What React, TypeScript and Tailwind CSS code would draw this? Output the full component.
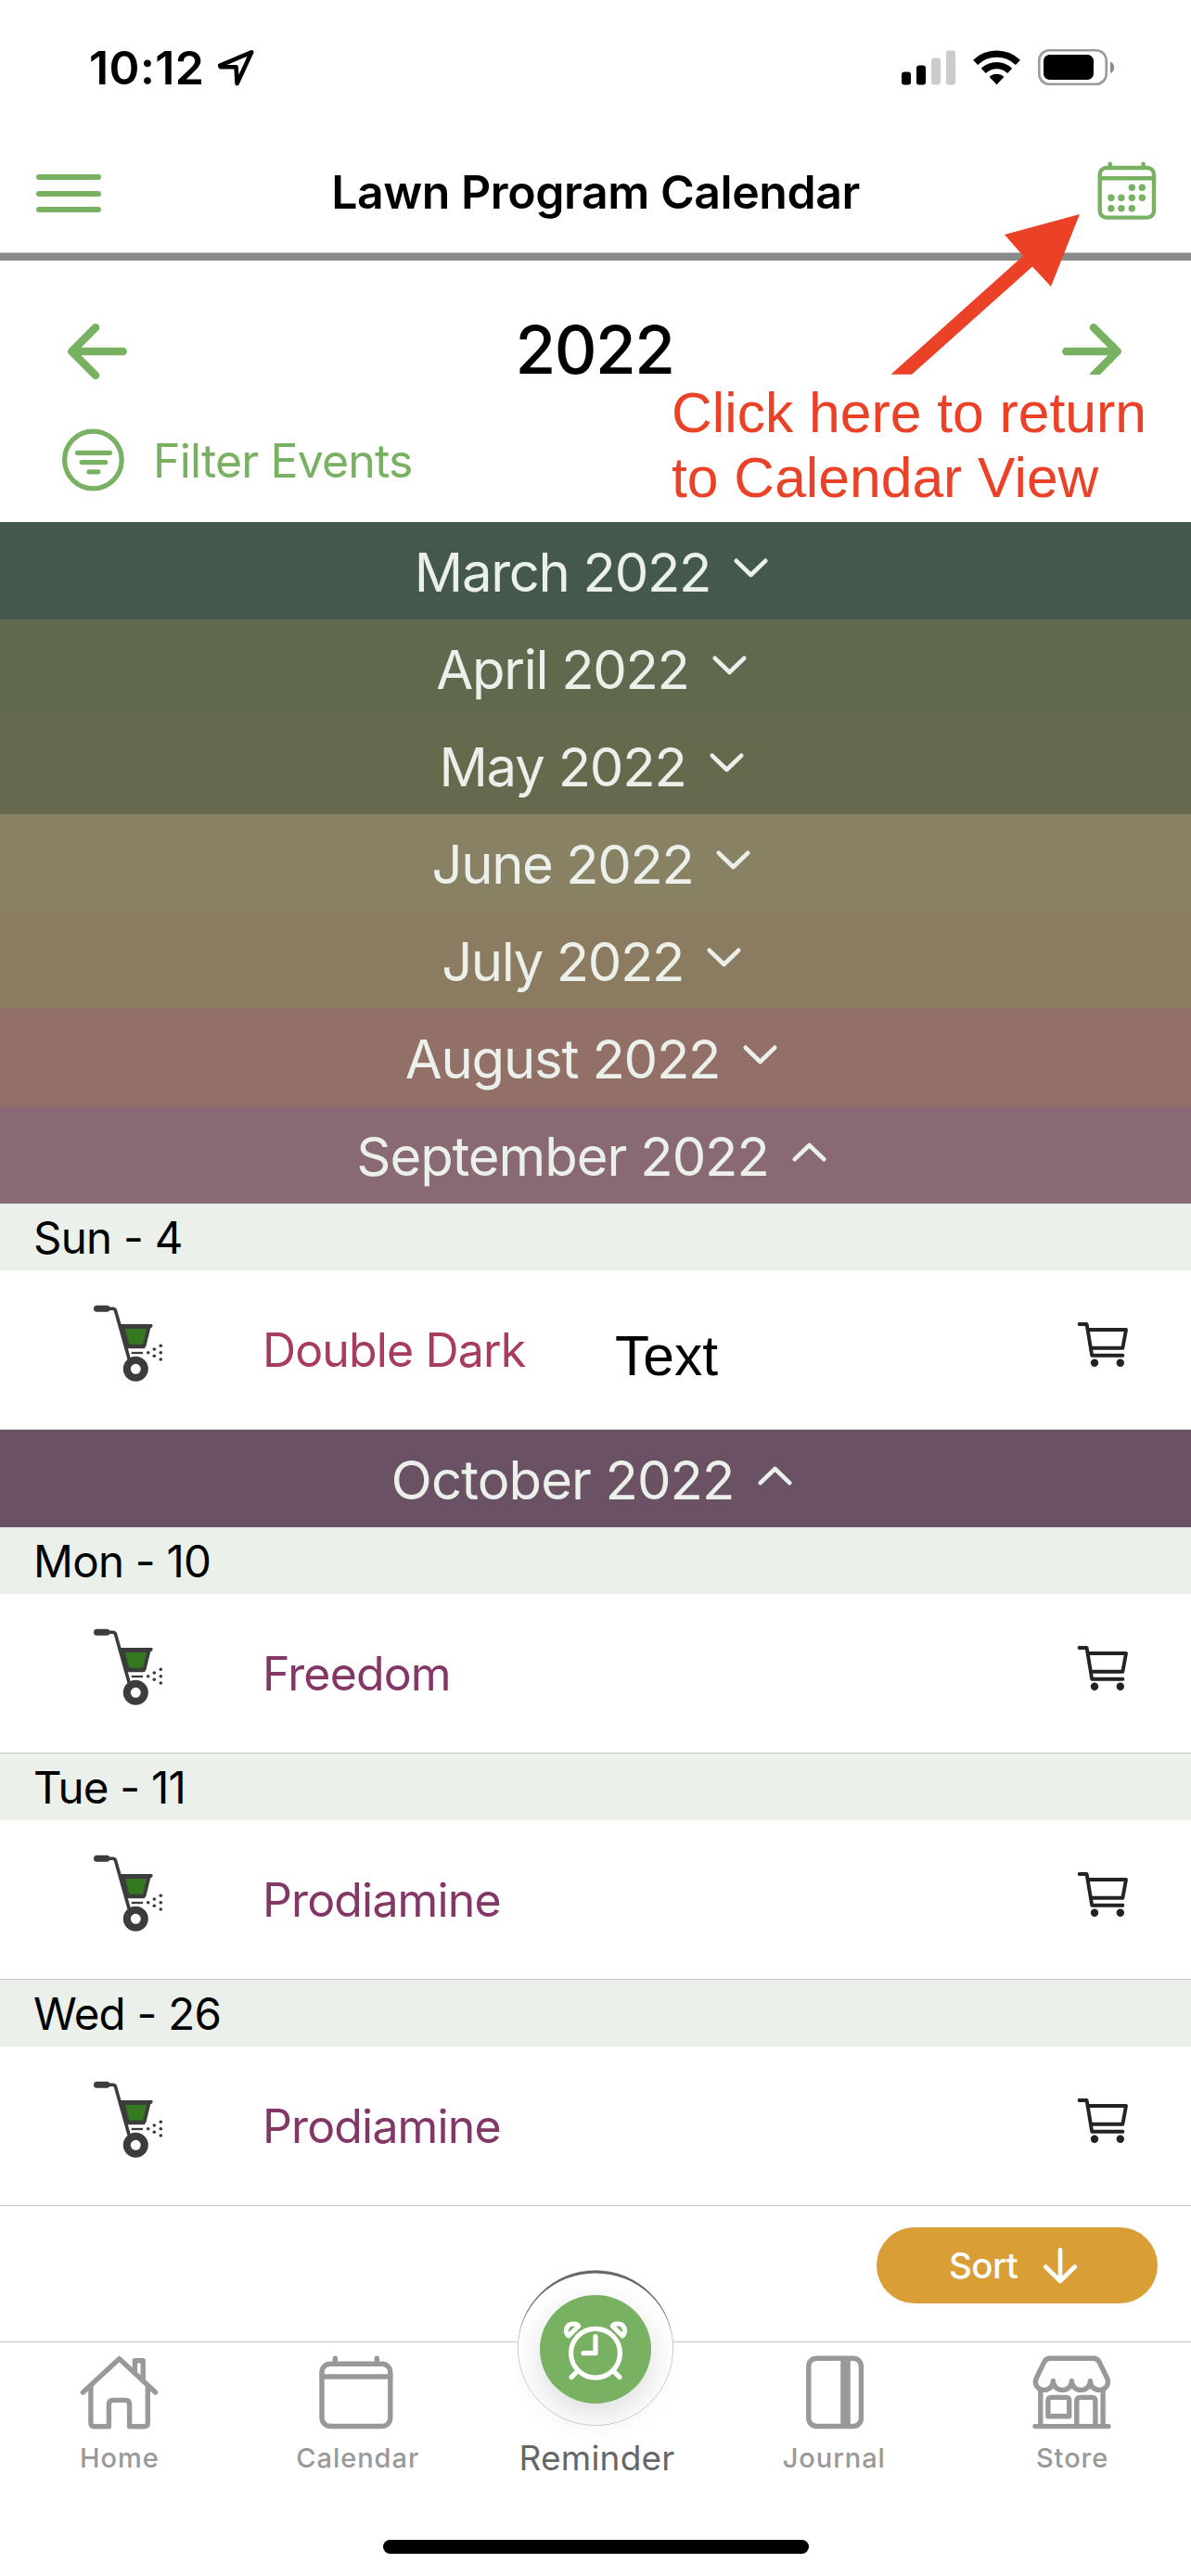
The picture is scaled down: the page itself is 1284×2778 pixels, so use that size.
import React, { useState } from 'react';

type LawnEvent = { day: string; name: string; color: string; note?: string };
type Month = { label: string; bg: string; tracking: string; events: LawnEvent[] };

const months: Month[] = [
  { label: 'March 2022', bg: 'bg-[#44594b]', tracking: 'tracking-[-1.3px]', events: [] },
  { label: 'April 2022', bg: 'bg-[#5f694e]', tracking: 'tracking-[-1.3px]', events: [] },
  { label: 'May 2022', bg: 'bg-[#67694d]', tracking: 'tracking-[-1.2px]', events: [] },
  { label: 'June 2022', bg: 'bg-[#888163]', tracking: 'tracking-[-1.4px]', events: [] },
  { label: 'July 2022', bg: 'bg-[#8b7b60]', tracking: 'tracking-[-1.4px]', events: [] },
  { label: 'August 2022', bg: 'bg-[#927067]', tracking: 'tracking-[-1.2px]', events: [] },
  {
    label: 'September 2022',
    bg: 'bg-[#896973]',
    tracking: 'tracking-[-1.1px]',
    events: [{ day: 'Sun - 4', name: 'Double Dark', color: 'text-[#a83c5d]', note: 'Text' }],
  },
  {
    label: 'October 2022',
    bg: 'bg-[#6a5264]',
    tracking: 'tracking-[-0.9px]',
    events: [
      { day: 'Mon - 10', name: 'Freedom', color: 'text-[#833766]' },
      { day: 'Tue - 11', name: 'Prodiamine', color: 'text-[#833766]' },
      { day: 'Wed - 26', name: 'Prodiamine', color: 'text-[#833766]' },
    ],
  },
];

function StatusBar() {
  return (
    <div className="flex h-[142px] items-center justify-between pt-[4px] pl-[96px] pr-[82px]">
      <div className="flex items-center gap-[14px]">
        <span className="text-[50px] leading-none font-semibold tracking-[0.4px]">10:12</span>
        <svg width="42" height="42" viewBox="0 0 42 42" fill="none" stroke="#000" strokeWidth="4.6" strokeLinejoin="round">
          <path d="M37.2 4.3 L3.2 18.6 L3.8 20.3 H20.6 L21.6 38 Z" />
        </svg>
      </div>
      <div className="flex items-center">
        <svg width="58" height="38" viewBox="0 0 58 38">
          <rect x="0" y="23.5" width="10" height="14" rx="3" fill="#000" />
          <rect x="16" y="16.5" width="10" height="21" rx="3" fill="#000" />
          <rect x="32" y="8.5" width="10" height="29" rx="3" fill="#cbcbcb" />
          <rect x="48" y="0.5" width="10" height="37" rx="3" fill="#cbcbcb" />
        </svg>
        <svg className="ml-[19px]" width="51" height="38" viewBox="0 0 51 38" fill="none" stroke="#000" strokeWidth="7.2">
          <path d="M2.6 13.4 A33 33 0 0 1 48.4 13.4" />
          <path d="M11.3 22.4 A20.3 20.3 0 0 1 39.7 22.4" />
          <path d="M25.5 37.3 L17.6 29 A11.5 11.5 0 0 1 33.4 29 Z" fill="#000" stroke="none" />
        </svg>
        <svg className="ml-[19px]" width="83" height="40" viewBox="0 0 83 40">
          <rect x="1.3" y="1.3" width="72.4" height="36.4" rx="11" fill="none" stroke="#9a9a9a" strokeWidth="2.6" />
          <rect x="6" y="6" width="54" height="27" rx="6.5" fill="#000" />
          <path d="M78 13.5 C80.6 14.6 82.2 17 82.2 19.7 C82.2 22.4 80.6 24.8 78 26 Z" fill="#8b8b8b" />
        </svg>
      </div>
    </div>
  );
}

function CalendarGridIcon() {
  const dots = [
    [38.3, 30.3], [49.3, 30.3],
    [15.9, 41.3], [26.9, 41.3], [38.3, 41.3], [49.3, 41.3],
    [15.9, 52.7], [26.9, 52.7], [38.3, 52.7],
  ];
  return (
    <svg className="mb-[3px]" width="66" height="67" viewBox="0 0 66 67" fill="none" stroke="#79b163" strokeWidth="4.4" strokeLinecap="round">
      <rect x="3.7" y="9" width="58.3" height="53.6" rx="7" />
      <path d="M4 20.3 H62 M14.7 4.8 V9 M50.6 4.8 V9" />
      {dots.map(([x, y]) => (
        <circle key={`${x}-${y}`} cx={x} cy={y} r="3.7" fill="#79b163" stroke="none" />
      ))}
    </svg>
  );
}

function NavBar() {
  return (
    <div className="flex h-[130px] items-center justify-between pl-[39px] pr-[36px]">
      <button className="flex w-[63px] flex-col gap-[11.5px] pt-[3px]">
        <span className="h-[6px] w-[70px] rounded-full bg-[#79b163]" />
        <span className="h-[6px] w-[70px] rounded-full bg-[#79b163]" />
        <span className="h-[6px] w-[70px] rounded-full bg-[#79b163]" />
      </button>
      <h1 className="text-[50px] leading-none font-semibold tracking-[-0.45px]">Lawn Program Calendar</h1>
      <CalendarGridIcon />
    </div>
  );
}

function ArrowIcon({ flip }: { flip?: boolean }) {
  return (
    <svg
      className={flip ? 'mt-[4px] rotate-180' : 'mt-[4px]'}
      width="66" height="62" viewBox="0 0 66 62"
      fill="none" stroke="#79b163" strokeWidth="8.6" strokeLinecap="round" strokeLinejoin="round"
    >
      <path d="M31 5.2 L5.3 31 L31 56.8 M7 31 H60.6" />
    </svg>
  );
}

function YearHeader() {
  return (
    <div className="h-[282px] pt-[20px]">
      <div className="flex h-[152px] items-center justify-between pr-[74px] pl-[72px]">
        <ArrowIcon />
        <h2 className="text-[71px] leading-none font-medium tracking-[-1.5px]">2022</h2>
        <ArrowIcon flip />
      </div>
      <button className="flex h-[86px] items-center gap-[30px] pl-[66px] text-[#79b163]">
        <svg width="69" height="68" viewBox="0 0 69 68" fill="none" stroke="currentColor" strokeWidth="5.3" strokeLinecap="round">
          <circle cx="34.4" cy="34" r="30.8" />
          <path d="M17.4 26.3 H52.4 M22.2 36.6 H47.6 M30 46.8 H39.8" />
        </svg>
        <span className="pt-[1px] text-[50px] leading-none tracking-[-0.85px]">Filter Events</span>
      </button>
    </div>
  );
}

// Note and pointer laid over the header
function CalendarHint() {
  return (
    <>
      <div className="absolute top-[404px] left-[724px] h-[146px] w-[520px] bg-white font-['Liberation_Sans'] text-[60.6px] leading-[70px] whitespace-nowrap text-[#ea4127]">
        <div className="pt-[6px]">
          Click here to return
          <br />
          to Calendar View
        </div>
      </div>
      <svg className="absolute top-[230px] left-[960px]" width="206" height="174" viewBox="0 0 206 174">
        <path d="M204 1 L123 23 L143 46 L0.5 173.7 H23 L153 57.5 L173 79 Z" fill="#ea4127" />
      </svg>
    </>
  );
}

function SpreaderIcon() {
  return (
    <svg width="76" height="86" viewBox="0 0 76 86" fill="none" stroke="#3c3c3c">
      <rect x="1" y="1.8" width="17.5" height="7" rx="3.5" fill="#3c3c3c" stroke="none" />
      <path d="M17 5.3 H21.5 Q24 5.3 24.6 7.6 L39.3 60" strokeWidth="3.6" />
      <path d="M29 22 H64 Q65.4 24 63.5 25.8 L62.3 26 L57.5 45.5 Q56.6 48.3 54 48.3 H36.7 Z" fill="#3c3c3c" stroke="none" />
      <path d="M35 27 H58.3 L54.5 42.6 Q54 43.8 52.6 43.8 H40.6 Q39.3 43.8 38.9 42.6 Z" fill="#34781f" stroke="none" />
      <path d="M41.7 53 H54" strokeWidth="2.3" />
      <circle cx="46.3" cy="70.3" r="9.5" strokeWidth="8" />
      <g fill="#3c3c3c" stroke="none">
        <circle cx="59.7" cy="52.7" r="1.8" />
        <circle cx="66.3" cy="49" r="1.8" />
        <circle cx="66.3" cy="56.3" r="1.8" />
        <circle cx="73.3" cy="45.3" r="1.8" />
        <circle cx="73.3" cy="52.7" r="1.8" />
        <circle cx="73.3" cy="60" r="1.8" />
      </g>
    </svg>
  );
}

function CartIcon() {
  return (
    <svg className="mb-[12px]" width="58" height="52" viewBox="0 0 58 52" fill="none" stroke="#222327" strokeWidth="3.9" strokeLinecap="round" strokeLinejoin="round">
      <path d="M3.6 4 H11.6 L17.2 37.8 H50.4" />
      <path d="M12.8 10 H54 L50.3 29.8 H16" />
      <circle cx="20" cy="45.8" r="4.2" fill="#222327" stroke="none" />
      <circle cx="47.8" cy="45.8" r="4.2" fill="#222327" stroke="none" />
    </svg>
  );
}

function EventRow({ event }: { event: LawnEvent }) {
  return (
    <div>
      <div className="flex h-[72px] items-center bg-[#ebf0ea] pt-[2px] pl-[36px] text-[47.5px] leading-none tracking-[-0.75px]">
        {event.day}
      </div>
      <div className="relative flex h-[172px] items-center border-b border-[#c8c8c8] pr-[66px] pl-[100px]">
        <div className="w-[183px] pb-[14px]">
          <SpreaderIcon />
        </div>
        <span className={`flex-1 text-[50px] leading-none tracking-[-0.85px] ${event.color}`}>{event.name}</span>
        {event.note && (
          <span className="absolute top-[57px] left-[663px] font-['Liberation_Sans'] text-[60.6px] leading-[70px]">
            {event.note}
          </span>
        )}
        <CartIcon />
      </div>
    </div>
  );
}

function MonthSection({ month }: { month: Month }) {
  const [open, setOpen] = useState(month.events.length > 0);
  return (
    <section>
      <button
        onClick={() => setOpen(!open)}
        className={`flex h-[105px] w-full items-center justify-center gap-[25px] pr-[9px] text-[#ebf0ea] ${month.bg}`}
      >
        <span className={`pt-[3px] text-[58px] leading-none ${month.tracking}`}>{month.label}</span>
        <svg className={open ? 'mb-[6px] rotate-180' : 'mb-[6px]'} width="37" height="21" viewBox="0 0 37 21" fill="none" stroke="currentColor" strokeWidth="4.6" strokeLinecap="round" strokeLinejoin="round">
          <path d="M2.8 2.8 L18.5 18 L34.2 2.8" />
        </svg>
      </button>
      {open && month.events.map((event) => <EventRow key={event.day} event={event} />)}
    </section>
  );
}

function HomeIcon() {
  return (
    <svg width="86" height="80" viewBox="0 0 86 80" fill="none" stroke="#999" strokeWidth="5.4" strokeLinecap="round" strokeLinejoin="round">
      <path d="M4.4 40 L43.6 3.7 L82.6 40" />
      <path d="M12.9 33 V73 Q12.9 76.7 16.6 76.7 H32.4 V53 Q32.4 48.4 37 48.4 H50 Q54.6 48.4 54.6 53 V76.7 H70.6 Q74.3 76.7 74.3 73 V33" />
      <path d="M60.4 18 V5.8 H69.2 V27" />
    </svg>
  );
}

function CalendarIcon() {
  return (
    <svg width="86" height="80" viewBox="0 0 86 80" fill="none" stroke="#999" strokeWidth="5.4" strokeLinecap="round">
      <rect x="5" y="9.3" width="73.8" height="67.2" rx="9" />
      <path d="M5 23 H78.8 M19.3 3.2 V9 M64.3 3.2 V9" />
    </svg>
  );
}

function JournalIcon() {
  return (
    <svg width="86" height="80" viewBox="0 0 86 80" fill="none" stroke="#999" strokeWidth="5.4">
      <rect x="15.8" y="3.2" width="56.6" height="73.3" rx="8.5" />
      <path d="M55.5 3 V77" strokeWidth="10.6" />
    </svg>
  );
}

function StoreIcon() {
  return (
    <svg width="86" height="80" viewBox="0 0 86 80" fill="none" stroke="#999" strokeWidth="5.4" strokeLinecap="round" strokeLinejoin="round">
      <path d="M19 3.3 H65.6 C69 3.3 71 4.8 72.3 7.6 L80.3 24.2 C83.6 31 79 37.4 72.4 37.4 C66.6 37.4 62.4 33.4 62.4 27.8 C62.4 33.4 58 37.4 52.4 37.4 C46.8 37.4 42.4 33.4 42.4 27.8 C42.4 33.4 38 37.4 32.4 37.4 C26.8 37.4 22.4 33.4 22.4 27.8 C22.4 33.4 18 37.4 12.4 37.4 C5.8 37.4 1.2 31 4.5 24.2 L12.5 7.6 C13.8 4.8 15.8 3.3 19 3.3 Z" />
      <path d="M8.8 38 V76 M76.1 38 V76 M3 76.6 H82" />
      <path d="M20.5 45.4 H36 Q39.7 45.4 39.7 49 V65.7 H16.9 V49 Q16.9 45.4 20.5 45.4 Z" />
      <path d="M47.8 76 V49.5 Q47.8 45.4 51.8 45.4 H64 Q67.9 45.4 67.9 49.5 V76" />
    </svg>
  );
}

function Tab({ label, children }: { label: string; children: React.ReactNode }) {
  return (
    <button className="flex flex-1 flex-col items-center pt-[14px]">
      {children}
      <span className="mt-[11px] pl-[1px] text-[29px] leading-[40px] font-medium tracking-[0.95px] text-[#999]">{label}</span>
    </button>
  );
}

function ReminderTab() {
  return (
    <button className="relative flex flex-1 flex-col items-center">
      <div className="absolute top-[-78px] flex h-[168px] w-[168px] items-start justify-center rounded-full bg-white pt-[27px]">
        <svg className="absolute inset-0" width="168" height="168" viewBox="0 0 168 168">
          <circle cx="84" cy="84" r="83.6" fill="none" stroke="#c4c4c4" strokeWidth="0.8" />
          <path d="M0.4 84 A83.6 83.6 0 0 1 167.6 84 A83.6 80.6 0 0 0 0.4 84 Z" fill="#666" />
        </svg>
        <div className="relative h-[117px] w-[120px] rounded-[50%] bg-[#79b163] shadow-[0_12px_36px_rgba(0,0,0,0.14)]">
          <svg width="120" height="117" viewBox="0 0 120 117" fill="none" stroke="#fff" strokeWidth="5.2" strokeLinecap="round" strokeLinejoin="round">
            <circle cx="60" cy="62.7" r="26.4" />
            <path d="M60 44.5 V62.7 H47" />
            <path d="M34 88.6 L41 81.6 M86 88.6 L79 81.6" />
            <path d="M31 44 C26.5 40 28 31 36 31 C39 31 41 32 41.7 33.5 Z" />
            <path d="M89 44 C93.5 40 92 31 84 31 C81 31 79 32 78.3 33.5 Z" />
          </svg>
        </div>
      </div>
      <span className="relative mt-[104px] pl-[3px] text-[37px] leading-[42px] tracking-[0.2px] text-[#666]">Reminder</span>
    </button>
  );
}

export default function App() {
  return (
    <div className="relative flex h-[2778px] w-[1284px] flex-col overflow-hidden bg-white font-['Inter',sans-serif] text-black">
      <StatusBar />
      <NavBar />
      <div className="h-[9px] border-t border-[#c6c6c8] bg-[#8b8b8b]" />
      <YearHeader />
      <CalendarHint />

      {/* Months */}
      <main>
        {months.map((month) => (
          <MonthSection key={month.label} month={month} />
        ))}
      </main>

      <div className="flex flex-1 justify-end pt-[23px] pr-[36px]">
        <button className="flex h-[82px] w-[303px] items-center gap-[27px] rounded-full bg-[#da9e37] pl-[78px] text-white">
          <span className="text-[38.5px] leading-none font-medium tracking-[-0.6px]">Sort</span>
          <svg width="38" height="40" viewBox="0 0 38 40" fill="none" stroke="currentColor" strokeWidth="4.6" strokeLinecap="round" strokeLinejoin="round">
            <path d="M19 3.2 V36.4 M3.2 21.5 L19 37 L34.8 21.5" />
          </svg>
        </button>
      </div>

      {/* Bottom tabs */}
      <nav className="flex h-[214px] border-t border-[#c6c6c6]">
        <Tab label="Home"><HomeIcon /></Tab>
        <Tab label="Calendar"><CalendarIcon /></Tab>
        <ReminderTab />
        <Tab label="Journal"><JournalIcon /></Tab>
        <Tab label="Store"><StoreIcon /></Tab>
      </nav>
      <div className="h-[39px]">
        <div className="mx-auto h-[15px] w-[459px] rounded-full bg-black" />
      </div>
    </div>
  );
}
